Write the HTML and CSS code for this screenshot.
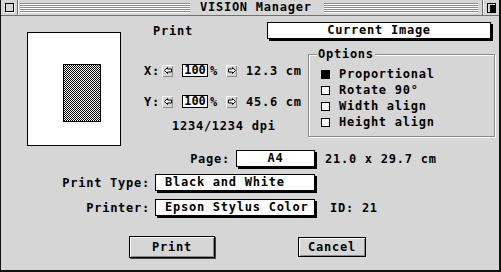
FILE: index.html
```html
<!DOCTYPE html>
<html>
<head>
<meta charset="utf-8">
<link rel="stylesheet" href="styles.css">
</head>
<body>
<div class="window">
  <div class="titlebar">
    <div class="tb-close"><span class="closebox"></span></div>
    <div class="tb-lines tb-lines-left"></div>
    <div class="tb-title">VISION Manager</div>
    <div class="tb-lines tb-lines-right"></div>
    <div class="tb-zoom">
      <svg width="9" height="10" viewBox="0 0 9 10"><rect x="0.5" y="0.5" width="8" height="9" fill="none" stroke="#000"/><rect x="3" y="2" width="6" height="8" fill="#000"/></svg>
    </div>
  </div>
  <div class="content">
    <div class="top">
      <div class="preview"><div class="image"></div></div>
      <div class="main">
        <div class="hdr">
          <span class="hdr-label">Print</span>
          <div class="popup popup-current">Current Image</div>
        </div>
        <div class="ctl">
          <div class="xy">
            <div class="scale-row">
              <span class="axis">X:</span>
              <span class="arrow"><svg width="8" height="7" viewBox="0 0 8 7"><path d="M0.5 3.5 L3.5 0.5 V2 H7.5 V5 H3.5 V6.5 Z" fill="#fff" stroke="#000"/></svg></span>
              <span class="field">100</span>
              <span class="pct">%</span>
              <span class="arrow"><svg width="8" height="7" viewBox="0 0 8 7"><path d="M7.5 3.5 L4.5 0.5 V2 H0.5 V5 H4.5 V6.5 Z" fill="#fff" stroke="#000"/></svg></span>
              <span class="dim">12.3 cm</span>
            </div>
            <div class="scale-row scale-row-y">
              <span class="axis">Y:</span>
              <span class="arrow"><svg width="8" height="7" viewBox="0 0 8 7"><path d="M0.5 3.5 L3.5 0.5 V2 H7.5 V5 H3.5 V6.5 Z" fill="#fff" stroke="#000"/></svg></span>
              <span class="field">100</span>
              <span class="pct">%</span>
              <span class="arrow"><svg width="8" height="7" viewBox="0 0 8 7"><path d="M7.5 3.5 L4.5 0.5 V2 H0.5 V5 H4.5 V6.5 Z" fill="#fff" stroke="#000"/></svg></span>
              <span class="dim">45.6 cm</span>
            </div>
            <div class="dpi">1234/1234 dpi</div>
          </div>
          <div class="group">
            <div class="legend">Options</div>
            <div class="check check-first"><span class="cb on"></span>Proportional</div>
            <div class="check"><span class="cb"></span>Rotate 90°</div>
            <div class="check"><span class="cb"></span>Width align</div>
            <div class="check"><span class="cb"></span>Height align</div>
          </div>
        </div>
      </div>
    </div>
    <div class="row row-page">
      <span class="lbl lbl-page">Page:</span>
      <div class="popup pop-page">A4</div>
      <span class="after">21.0 x 29.7 cm</span>
    </div>
    <div class="row row-type">
      <span class="lbl lbl-wide">Print Type:</span>
      <div class="popup pop-wide">Black and White</div>
    </div>
    <div class="row row-printer">
      <span class="lbl lbl-wide">Printer:</span>
      <div class="popup pop-wide">Epson Stylus Color</div>
      <span class="id">ID: 21</span>
    </div>
    <div class="buttons">
      <div class="btn btn-print">Print</div>
      <div class="btn btn-cancel">Cancel</div>
    </div>
  </div>
</div>
</body>
</html>
```
FILE: styles.css
```css
* { box-sizing: border-box; }
html, body { margin: 0; padding: 0; }
body {
  width: 501px;
  height: 272px;
  overflow: hidden;
  background: #d6d6d6;
  font-family: "DejaVu Sans Mono", monospace;
  font-weight: bold;
  font-size: 12px;
  letter-spacing: 0.75px;
  color: #000;
}
.window {
  width: 501px;
  height: 272px;
  border-left: 1px solid #111;
  border-right: 2px solid #111;
  border-bottom: 2px solid #111;
  display: flex;
  flex-direction: column;
}
.titlebar {
  flex: none;
  height: 16px;
  border-bottom: 1px solid #707070;
  display: flex;
  align-items: flex-start;
}
.tb-close {
  width: 17px;
  height: 15px;
  border-right: 1px solid #707070;
  box-shadow: 1px 0 0 #fff;
  display: flex;
  align-items: center;
  justify-content: center;
}
.closebox {
  width: 9px;
  height: 9px;
  border: 1px solid #000;
  background: #d6d6d6;
  box-shadow: 1px 1px 0 #fff;
}
.tb-lines {
  height: 10px;
  margin-top: 3px;
  background: repeating-linear-gradient(to bottom, #8c8c8c 0 1px, #fff 1px 2px);
}
.tb-lines-left { width: 170px; margin-left: 2px; }
.tb-lines-right { flex: 1; margin-right: 4px; }
.tb-title { padding: 0 12px 0 10px; line-height: 15px; white-space: nowrap; }
.tb-zoom {
  width: 17px;
  height: 15px;
  border-left: 1px solid #707070;
  box-shadow: inset 1px 0 0 #fff;
  display: flex;
  justify-content: center;
  padding-top: 3px;
}
.content { flex: 1; display: flex; flex-direction: column; }
.top { display: flex; align-items: flex-start; }
.preview {
  margin-left: 26px;
  margin-top: 16px;
  width: 94px;
  height: 114px;
  border: 1px solid #000;
  background: #fff;
  padding: 31px 0 0 35px;
}
.image {
  width: 38px;
  height: 58px;
  border: 1px solid #000;
  background: conic-gradient(#000 25%, #fff 0 50%, #000 0 75%, #fff 0) 0 0 / 2px 2px;
}
.main { display: flex; flex-direction: column; }
.hdr { display: flex; align-items: center; margin-top: 6px; height: 17px; }
.hdr-label { width: 146px; padding-left: 32px; }
.popup {
  height: 17px;
  border: 1px solid #000;
  background: #fff;
  box-shadow: 2px 2px 0 #000;
  line-height: 15px;
  white-space: nowrap;
}
.popup-current { width: 224px; text-align: center; }
.ctl { display: flex; align-items: flex-start; }
.xy { width: 164px; margin-left: 23px; margin-top: 25px; display: flex; flex-direction: column; }
.scale-row { display: flex; align-items: center; height: 13px; }
.scale-row-y { margin-top: 18px; }
.axis { width: 18px; }
.arrow {
  width: 11px;
  height: 12px;
  background: #d6d6d6;
  box-shadow: inset 1px 1px 0 #fff, inset -1px -1px 0 #8a8a8a;
  display: flex;
  align-items: center;
  justify-content: center;
}
.arrow svg { display: block; }
.field {
  width: 26px;
  height: 13px;
  margin-left: 9px;
  border: 1px solid #000;
  background: #fff;
  line-height: 11px;
  text-align: center;
  letter-spacing: 0;
}
.pct { width: 16px; margin-left: 2px; }
.dim { margin-left: 9px; white-space: nowrap; }
.dpi { margin-left: 28px; margin-top: 11px; line-height: 14px; }
.group {
  width: 187px;
  height: 83px;
  margin-top: 15px;
  border: 1px solid #8a8a8a;
  box-shadow: inset 1px 1px 0 #fff, 1px 1px 0 #fff;
  display: flex;
  flex-direction: column;
}
.legend {
  align-self: flex-start;
  margin: -8px 0 0 8px;
  padding: 0 1px;
  background: #d6d6d6;
  line-height: 14px;
}
.check { display: flex; align-items: center; height: 16px; margin-left: 12px; white-space: nowrap; }
.check-first { margin-top: 5px; }
.cb {
  width: 9px;
  height: 9px;
  border: 1px solid #000;
  background: #fff;
  margin-right: 9px;
  flex: none;
}
.cb.on { background: #000; }
.row { display: flex; align-items: center; height: 17px; }
.row-page { margin-top: 4px; }
.row-type { margin-top: 7px; }
.row-printer { margin-top: 8px; }
.lbl { text-align: right; white-space: nowrap; }
.lbl-page { width: 235px; padding-right: 6px; }
.lbl-wide { width: 154px; padding-right: 5px; }
.pop-page { width: 79px; text-align: center; }
.pop-wide { width: 160px; padding-left: 9px; }
.after { margin-left: 10px; white-space: nowrap; }
.id { margin-left: 15px; }
.buttons { display: flex; align-items: center; margin-top: 20px; }
.btn {
  border: 1px solid #000;
  background: #d6d6d6;
  box-shadow: inset 1px 1px 0 #fff, inset -1px -1px 0 #8a8a8a;
  text-align: center;
}
.btn-print { width: 86px; height: 22px; line-height: 20px; margin-left: 128px; box-shadow: inset 1px 1px 0 #fff, inset -1px -1px 0 #8a8a8a, 1px 1px 0 #444; }
.btn-cancel { width: 68px; height: 20px; line-height: 18px; margin-left: 83px; }
```
